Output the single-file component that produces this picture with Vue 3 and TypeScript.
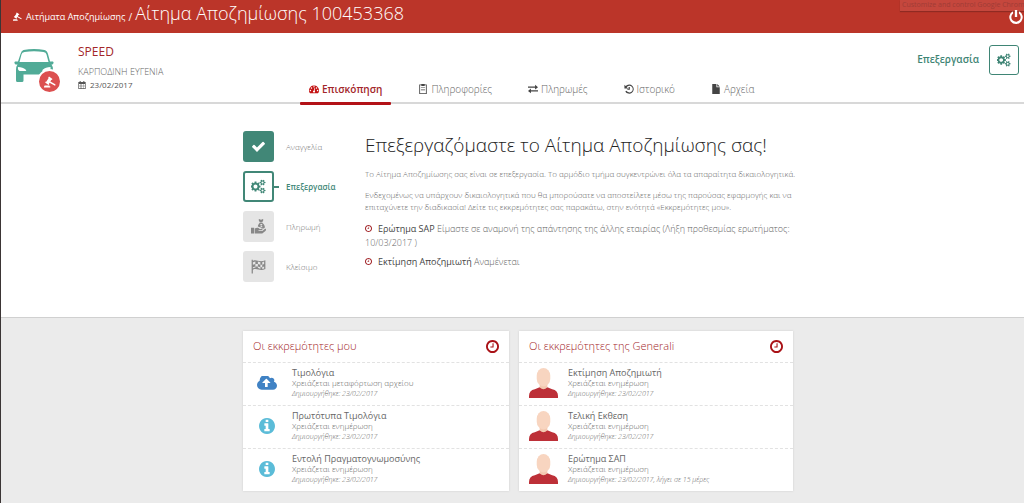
<script setup lang="ts">
import { defineComponent, h } from 'vue'

interface IconShape { box: string; d: string }
interface Tab { label: string; icon: string }
interface Step { label: string; icon: string; state: string }
interface Task { title: string; note: string; created: string; icon: string }
interface Panel { title: string; tasks: Task[] }

const disc = 'q0 209-103 385.5t-279.5 279.5-385.5 103-385.5-103-279.5-279.5-103-385.5 103-385.5 279.5-279.5 385.5-103 385.5 103 279.5 279.5 103 385.5z'
const smallCog = 'v140q0 16-149 31-12 27-30 52 51 113 51 138 0 4-4 7-122 71-124 71-8 0-46-47t-52-68q-20 2-30 2t-30-2q-14 21-52 68t-46 47q-2 0-124-71-4-3-4-7 0-25 51-138-18-25-30-52-149-15-149-31v-140q0-16 149-31 13-29 30-52-51-113-51-138 0-4 4-7 4-2 35-20t59-34 30-16q8 0 46 46.5t52 67.5q20-2 30-2t30 2q51-71 92-112l6-2q4 0 124 70 4 3 4 7 0 25-51 138 17 23 30 52 149 15 149 31z'

const shapes: Record<string, IconShape> = {
  check: { box: '0 0 1792 1792', d: 'M1671 566q0 40-28 68l-724 724-136 136q-28 28-68 28t-68-28l-136-136-362-362q-28-28-28-68t28-68l136-136q28-28 68-28t68 28l294 295 656-657q28-28 68-28t68 28l136 136q28 28 28 68z' },
  cogs: { box: '0 0 1920 1792', d: 'M832 896q0-106-75-181t-181-75-181 75-75 181 75 181 181 75 181-75 75-181zm768 512q0-52-38-90t-90-38-90 38-38 90q0 53 37.5 90.5t90.5 37.5 90.5-37.5 37.5-90.5zm0-1024q0-52-38-90t-90-38-90 38-38 90q0 53 37.5 90.5t90.5 37.5 90.5-37.5 37.5-90.5zm-384 421v185q0 10-7 19.5t-16 10.5l-155 24q-11 35-32 76 34 48 90 115 7 11 7 20 0 12-7 19-23 30-82.5 89.5t-78.5 59.5q-11 0-21-7l-115-90q-37 19-77 31-11 108-23 155-7 24-30 24h-186q-11 0-20-7.5t-10-17.5l-23-153q-34-10-75-31l-118 89q-7 7-20 7-11 0-21-8-144-133-144-160 0-9 7-19 10-14 41-53t47-61q-23-44-35-82l-152-24q-10-1-17-9.5t-7-19.5v-185q0-10 7-19.5t16-10.5l155-24q11-35 32-76-34-48-90-115-7-11-7-20 0-12 7-20 22-30 82-89t79-59q11 0 21 7l115 90q34-18 77-32 11-108 23-154 7-24 30-24h186q11 0 20 7.5t10 17.5l23 153q34 10 75 31l118-89q8-7 20-7 11 0 21 8 144 133 144 160 0 8-7 19-12 16-42 54t-45 60q23 48 34 82l152 23q10 2 17 10.5t7 19.5zm640 533' + smallCog + 'm0-1024' + smallCog },
  info: { box: '128 128 1536 1536', d: 'M1152 1376v-160q0-14-9-23t-23-9h-96v-512q0-14-9-23t-23-9h-320q-14 0-23 9t-9 23v160q0 14 9 23t23 9h96v320h-96q-14 0-23 9t-9 23v160q0 14 9 23t23 9h448q14 0 23-9t9-23zm-128-896v-160q0-14-9-23t-23-9h-192q-14 0-23 9t-9 23v160q0 14 9 23t23 9h192q14 0 23-9t9-23zm640 416' + disc },
  clock: { box: '128 128 1536 1536', d: 'M1024 544v448q0 14-9 23t-23 9h-320q-14 0-23-9t-9-23v-64q0-14 9-23t23-9h224v-352q0-14 9-23t23-9h64q14 0 23 9t9 23zm416 352q0-148-73-273t-198-198-273-73-273 73-198 198-73 273 73 273 198 198 273 73 273-73 198-198 73-273zm224 0' + disc },
  upload: { box: '0 256 1920 1280', d: 'M1280 864q0-14-9-23l-352-352q-9-9-23-9t-23 9l-351 351q-10 12-10 24 0 14 9 23t23 9h224v352q0 13 9.5 22.5t22.5 9.5h192q13 0 22.5-9.5t9.5-22.5v-352h224q13 0 22.5-9.5t9.5-22.5zm640 288q0 159-112.5 271.5t-271.5 112.5h-1088q-185 0-316.5-131.5t-131.5-316.5q0-130 70-240t188-165q-2-30-2-43 0-212 150-362t362-150q156 0 285.5 87t188.5 231q71-62 166-62 106 0 181 75t75 181q0 76-41 138 130 31 213.5 135.5t83.5 238.5z' },
  gauge: { box: '0 128 1792 1536', d: 'M384 1152q0-53-37.5-90.5t-90.5-37.5-90.5 37.5-37.5 90.5 37.5 90.5 90.5 37.5 90.5-37.5 37.5-90.5zm192-448q0-53-37.5-90.5t-90.5-37.5-90.5 37.5-37.5 90.5 37.5 90.5 90.5 37.5 90.5-37.5 37.5-90.5zm428 481l101-382q6-26-7.5-48.5t-38.5-29.5-48 6.5-30 39.5l-101 382q-60 5-107 43.5t-63 98.5q-20 77 20 146t117 89 146-20 89-117q16-60-6-117t-72-91zm660-33q0-53-37.5-90.5t-90.5-37.5-90.5 37.5-37.5 90.5 37.5 90.5 90.5 37.5 90.5-37.5 37.5-90.5zm-640-640q0-53-37.5-90.5t-90.5-37.5-90.5 37.5-37.5 90.5 37.5 90.5 90.5 37.5 90.5-37.5 37.5-90.5zm448 192q0-53-37.5-90.5t-90.5-37.5-90.5 37.5-37.5 90.5 37.5 90.5 90.5 37.5 90.5-37.5 37.5-90.5zm320 448q0 261-141 483-19 29-54 29h-1402q-35 0-54-29-141-221-141-483 0-182 71-348t191-286 286-191 348-71 348 71 286 191 191 286 71 348z' },
  gavel: { box: '0 0 24 24', d: 'M10 1l7 5-1.500 2-.8-.4-2 3.400 9.800 5.500q1.500 1.500-.5 3l-11-6-1 1.800.7.700-1.500 2-7-5 1.500-2 .8.400 4.500-7-.6-.8zM1 19h10v1.500h1.500v2.500h-12.500v-2.500h1z' },
  clipboard: { box: '0 0 24 24', d: 'M8 1V0h8v1h5v23H3V1zm-3 2v19h14V3h-3v2H8V3zm2 5h10v1H7zm0 4h10v1H7zm0 4h10v1H7z' },
  exchange: { box: '0 0 24 24', d: 'M0 6h17V2l7 5.500-7 5.500V9H0zM24 18H7v4l-7-5.500L7 11v4h17z' },
  history: { box: '0 0 24 24', d: 'M1 2l3 3a11 11 0 1 1-1 13l3-2a8 8 0 1 0 .5-8.500L10 11H1zM11 7h3v7H8v-2.500h3z' },
  file: { box: '0 0 24 24', d: 'M3 0h10v8h8v16H3zM15 0l6 6h-6z' },
  calendar: { box: '0 0 24 24', d: 'M1 3h4V0h3v3h8V0h3v3h4v21H1zm2 6v3h4V9zm5 0v3h3V9zm4 0v3h4V9zm5 0v3h4V9zM3 13v4h4v-4zm5 0v4h3v-4zm4 0v4h4v-4zm5 0v4h4v-4zM3 18v4h4v-4zm5 0v4h3v-4zm4 0v4h4v-4zm5 0v4h4v-4z' },
  power: { box: '0 0 24 24', d: 'M10 0h4v12h-4zM7 2v4a8 8 0 1 0 10 0V2a11.500 11.500 0 1 1-10 0z' },
  money: { box: '0 0 24 24', d: 'M0 14h5v9H0zM6 15c4-2 6-1 8 1h4c1 1 0 2-1 2h-5v1h6l4-3c2-1 3 1 1 3l-5 4H6zM14 0l2 1.500L18 0l2 1-2 4h-4l-2-4zM14 6h4c4 3 6 9 2 9l-3 0c-2-2-3-2-6-3 0-2 1-4 3-6zm1 2v2l2 1-2 1v1h3v-2l-2-1 2-1V8z' },
  flag: { box: '0 0 24 24', d: 'M1 1h2v2c6-3 10 3 20-1v14c-9 4-13-2-20 1v6H1zm2 4v4l4-1v4l-4 1v2c2-1 3-1 4-1v-2l4 0v2l4 2v-3l-4-1V8l4 1v4l3 0v3l3-1v-3l-3 1V9l3-1V4l-3 1v4l-3 0V5l-4-1v4H7V4z' },
}

const Icon = defineComponent({
  props: { name: { type: String, required: true } },
  setup(props) {
    return () => h('svg', { viewBox: shapes[props.name].box, fill: 'currentColor', 'fill-rule': 'evenodd', 'aria-hidden': 'true' }, [h('path', { d: shapes[props.name].d })])
  },
})

const tabs: Tab[] = [
  { label: 'Επισκόπηση', icon: 'gauge' },
  { label: 'Πληροφορίες', icon: 'clipboard' },
  { label: 'Πληρωμές', icon: 'exchange' },
  { label: 'Ιστορικό', icon: 'history' },
  { label: 'Αρχεία', icon: 'file' },
]
const steps: Step[] = [
  { label: 'Αναγγελία', icon: 'check', state: 'done' },
  { label: 'Επεξεργασία', icon: 'cogs', state: 'current' },
  { label: 'Πληρωμή', icon: 'money', state: 'waiting' },
  { label: 'Κλείσιμο', icon: 'flag', state: 'waiting' },
]
const update = 'Χρειάζεται ενημέρωση'
const created = 'Δημιουργήθηκε: 23/02/2017'
const panels: Panel[] = [
  {
    title: 'Οι εκκρεμότητες μου',
    tasks: [
      { title: 'Τιμολόγια', note: 'Χρειάζεται μεταφόρτωση αρχείου', created, icon: 'upload' },
      { title: 'Πρωτότυπα Τιμολόγια', note: update, created, icon: 'info' },
      { title: 'Εντολή Πραγματογνωμοσύνης', note: update, created, icon: 'info' },
    ],
  },
  {
    title: 'Οι εκκρεμότητες της Generali',
    tasks: [
      { title: 'Εκτίμηση Αποζημιωτή', note: update, created, icon: 'person' },
      { title: 'Τελική Εκθεση', note: update, created, icon: 'person' },
      { title: 'Ερώτημα ΣΑΠ', note: update, created: created + ', λήγει σε 15 μέρες', icon: 'person' },
    ],
  },
]
</script>

<template>
  <div class="page">
    <header class="topbar">
      <a class="crumb" href="#"><Icon name="gavel" class="crumb-icon" />Αιτήματα Αποζημίωσης</a>
      <span class="slash">/</span>
      <h1>Αίτημα Αποζημίωσης 100453368</h1>
      <div class="tooltip">Customize and control Google Chrome</div>
      <button class="power" aria-label="Αποσύνδεση"><Icon name="power" /></button>
    </header>

    <section class="summary">
      <div class="identity">
        <div class="vehicle">
          <svg class="car" viewBox="0 0 80 66" aria-hidden="true">
            <path fill="#51ab97" fill-rule="evenodd" d="M19 2q21-4 42 0 5 1 7 8l4 15 6 0q3 3-1 6l-2 0q3 4 3 10v10H19v12q0 3-3 3H7q-3 0-3-3V41q0-6 3-10l-4 0q-4-3-1-6l6 0 5-15q2-7 6-8zM21 6q-5 0-6 5l-4 15h58l-4-15q-1-5-6-5-19-3-38 0zM8 36q-1 7 3 8l12 0q3-1 0-3-5-5-15-5zM73 36q-10 0-15 5-3 2 0 3h12q4-1 3-8z" />
          </svg>
          <span class="badge"><Icon name="gavel" /></span>
        </div>
        <div>
          <h2>SPEED</h2>
          <div class="owner">ΚΑΡΠΟΔΙΝΗ ΕΥΓΕΝΙΑ</div>
          <div class="date"><Icon name="calendar" />23/02/2017</div>
        </div>
      </div>
      <nav class="tabs">
        <a v-for="(tab, i) in tabs" :key="tab.label" href="#" class="tab" :class="{ active: i === 0 }"><Icon :name="tab.icon" />{{ tab.label }}</a>
      </nav>
      <div class="status">
        <span>Επεξεργασία</span>
        <button aria-label="Επεξεργασία"><Icon name="cogs" /></button>
      </div>
    </section>

    <main>
      <section class="overview">
        <div class="container progress">
          <ol class="steps">
            <li v-for="step in steps" :key="step.label" :class="step.state">
              <span class="step-box"><Icon :name="step.icon" /></span>
              <span class="step-label">{{ step.label }}</span>
            </li>
          </ol>
          <article>
            <h2>Επεξεργαζόμαστε το Αίτημα Αποζημίωσης σας!</h2>
            <p>Το Αίτημα Αποζημίωσης σας είναι σε επεξεργασία. Το αρμόδιο τμήμα συγκεντρώνει όλα τα απαραίτητα δικαιολογητικά.</p>
            <p>Ενδεχομένως να υπάρχουν δικαιολογητικά που θα μπορούσατε να αποστείλετε μέσω της παρούσας εφαρμογής και να<br>επιταχύνετε την διαδικασία! Δείτε τις εκκρεμότητες σας παρακάτω, στην ενότητά «Εκκρεμότητες μου».</p>
            <div class="pending"><Icon name="clock" /><strong>Ερώτημα SAP</strong> Είμαστε σε αναμονή της απάντησης της άλλης εταιρίας (Λήξη προθεσμίας ερωτήματος:<br>10/03/2017 )</div>
            <div class="pending"><Icon name="clock" /><strong>Εκτίμηση Αποζημιωτή</strong> Αναμένεται</div>
          </article>
        </div>
      </section>

      <section class="todo">
        <div class="container panels">
          <div v-for="panel in panels" :key="panel.title" class="panel">
            <div class="panel-head"><h3>{{ panel.title }}</h3><Icon name="clock" /></div>
            <div v-for="task in panel.tasks" :key="task.title" class="task">
              <div class="task-icon" :class="task.icon">
                <svg v-if="task.icon === 'person'" viewBox="0 0 30 31" aria-hidden="true">
                  <path fill="#bd3038" d="M0 31v-2q0-6 6-7l5-2h8l5 2q6 1 6 7v2z" />
                  <path fill="#f3c9b1" d="M11 15h8v5q-4 4-8 0z" />
                  <rect x="8" y="0" width="14" height="19" rx="7" ry="8" fill="#f8d5c0" />
                </svg>
                <Icon v-else :name="task.icon" />
              </div>
              <div>
                <div class="task-title">{{ task.title }}</div>
                <div class="task-note">{{ task.note }}</div>
                <div class="task-created">{{ task.created }}</div>
              </div>
            </div>
          </div>
        </div>
      </section>
    </main>
  </div>
</template>

<style>
body { margin: 0; background: #ebebeb; }
</style>

<style scoped>
* { box-sizing: border-box; }
h1, h2, h3, p, ol { margin: 0; padding: 0; font-weight: 300; }
a { color: inherit; text-decoration: none; }
button { padding: 0; border: 0; background: none; display: grid; place-items: center; }
svg { flex: none; }
.page { display: flex; flex-direction: column; min-height: 100vh; overflow: hidden; border-left: 1px solid #3b3535; font: 300 9px/14px "Open Sans", sans-serif; color: #666; }

.topbar { position: relative; display: flex; align-items: center; height: 33px; padding-left: 12px; background: #bb3529; color: #fff; overflow: hidden; }
.crumb { display: flex; align-items: center; gap: 4px; font-size: 9px; font-weight: 400; }
.crumb-icon { width: 9px; height: 9px; }
.slash { margin: 0 3px; font-size: 10px; font-weight: 400; }
h1 { font-size: 18px; line-height: 26px; padding-bottom: 8px; }
.tooltip { position: absolute; top: 0; left: calc(100% - 124px); right: 0; padding: 0 2px; height: 11px; background: #c5473d; box-shadow: 0 1px 1px #902a22; color: #a03c36; font-size: 7px; font-weight: 400; line-height: 10px; white-space: nowrap; }
.power { position: relative; width: 14px; height: 14px; margin-left: auto; margin-right: 1px; color: #fff; }
.power svg { width: 14px; height: 14px; }

.summary { display: grid; grid-template-columns: 299px auto 1fr; height: 71px; background: #fff; border-bottom: 2px solid #d8d8d8; }
.identity { display: flex; gap: 16px; padding: 11px 0 0 13px; }
.vehicle { position: relative; width: 48px; height: 50px; }
.car { position: relative; width: 40px; height: 33px; margin-top: 5px; }
.badge { position: absolute; right: 0; bottom: 0; width: 25px; height: 25px; display: grid; place-items: center; border: 2px solid #fff; border-radius: 50%; background: #dc5050; color: #fff; }
.badge svg { width: 12px; height: 12px; }
.identity h2 { font-size: 12px; line-height: 16px; font-weight: 400; color: #a3262a; }
.owner { margin-top: 5px; }
.date { display: flex; align-items: center; gap: 4px; line-height: 12px; font-size: 8px; font-weight: 400; color: #555; }
.date svg { width: 8px; height: 8px; }
.tabs { display: flex; gap: 18px; align-items: flex-end; }
.tab { position: relative; display: flex; align-items: center; gap: 3px; height: 26px; padding: 0 9px; font-size: 10px; white-space: nowrap; color: #666; }
.tab svg { width: 10px; height: 10px; color: #444; }
.tab.active { color: #a3262a; font-weight: 600; }
.tab.active svg { color: #c41414; }
.tab.active::after { content: ""; position: absolute; left: 0; right: 0; bottom: -3px; height: 3px; border-radius: 1px; background: #b31217; }
.status { display: flex; justify-content: flex-end; gap: 10px; padding: 12px 5px 0 0; color: #3f8575; font-size: 10px; font-weight: 600; line-height: 28px; }
.status button { width: 30px; height: 30px; border: 1px solid #3f8575; border-radius: 3px; color: inherit; }
.status svg { width: 14px; height: 14px; }

.container { width: 550px; max-width: 100%; margin: 0 auto; }
main { flex: 1; }
.overview, .todo { padding-left: 11px; }
.overview { height: 214px; padding-top: 27px; background: #fff; border-bottom: 1px solid #d0d0d0; }
.progress { display: flex; gap: 22px; }
.steps { flex: 0 0 100px; list-style: none; }
.steps li { display: flex; align-items: center; gap: 12px; margin-bottom: 9px; font-size: 8px; color: #777; }
.step-box { position: relative; width: 31px; height: 31px; display: grid; place-items: center; border-radius: 3px; background: #e5e5e5; color: #888; }
.step-box svg { width: 15px; height: 15px; }
.done .step-box { background: #418777; color: #fff; }
.current .step-box { border: 2px solid #418777; background: #fff; color: #418777; }
.current .step-box::after { content: ""; position: absolute; left: 29px; top: 13px; width: 5px; height: 2px; background: #418777; }
.steps .current { color: #418777; font-weight: 600; }
article { flex: 1; white-space: nowrap; }
article h2 { font-size: 19px; line-height: 28px; color: #222; margin-bottom: 9px; }
article p { font-size: 8px; line-height: 12px; margin-bottom: 9px; }
.pending { line-height: 14px; margin-bottom: 5px; }
.pending svg { width: 7px; height: 7px; margin-right: 6px; color: #a3262a; }
.pending strong { font-weight: 400; color: #444; }

.todo { padding-top: 13px; padding-bottom: 13px; }
.panels { display: grid; grid-template-columns: 266fr 274fr; gap: 10px; }
.panel { background: #fff; box-shadow: 0 0 2px #ccc; }
.panel-head { display: flex; align-items: center; justify-content: space-between; height: 31px; padding: 0 10px; color: #a3262a; }
.panel-head h3 { font-size: 11px; line-height: 16px; padding-bottom: 2px; }
.panel-head svg { width: 13px; height: 13px; color: #a91217; }
.task { display: flex; align-items: flex-start; gap: 10px; height: 43px; padding: 4px 9px 0; border-top: 1px dashed #e2e2e2; white-space: nowrap; }
.task-icon { display: grid; place-items: center; width: 30px; height: 31px; }
.task-icon.person svg { width: 29px; height: 30px; }
.task-icon.upload svg { width: 20px; height: 14px; color: #4082c4; }
.task-icon.info svg { width: 16px; height: 16px; color: #5bbcd8; }
.task-title { font-size: 9px; font-weight: 400; line-height: 11px; color: #666; }
.task-note { font-size: 8px; line-height: 10px; }
.task-created { font-size: 7px; line-height: 12px; font-style: italic; }
</style>
